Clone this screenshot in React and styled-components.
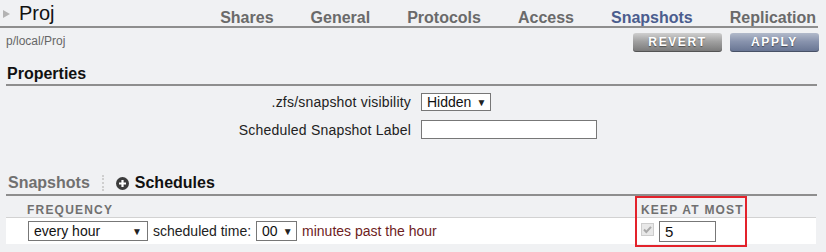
import React from 'react';
import styled, { createGlobalStyle } from 'styled-components';

const GlobalStyle = createGlobalStyle`
  html, body {
    margin: 0;
    padding: 0;
    background: #f0f1f3;
  }
  body {
    font-family: "Liberation Sans", Arial, sans-serif;
    color: #222;
  }
`;

const tabs = ['Shares', 'General', 'Protocols', 'Access', 'Snapshots', 'Replication'];

export default function App() {
  return (
    <Page>
      <GlobalStyle />
      <Header>
        <Title>
          <Caret />
          Proj
        </Title>
        <Tabs>
          {tabs.map((t) => (
            <Tab key={t} $active={t === 'Snapshots'}>
              {t}
            </Tab>
          ))}
        </Tabs>
      </Header>

      <SubBar>
        <Path>p/local/Proj</Path>
        <Actions>
          <Button $variant="gray">REVERT</Button>
          <Button $variant="blue">APPLY</Button>
        </Actions>
      </SubBar>

      <SectionTitle>Properties</SectionTitle>
      <PropGrid>
        <Label>.zfs/snapshot visibility</Label>
        <div>
          <SelectBox $width={70} $height={18}>
            Hidden <Arrow>▼</Arrow>
          </SelectBox>
        </div>
        <Label>Scheduled Snapshot Label</Label>
        <div>
          <TextInput $width={176} />
        </div>
      </PropGrid>

      <SubTabs>
        <SubTab>Snapshots</SubTab>
        <Separator />
        <AddIcon viewBox="0 0 13 13">
          <circle cx="6.5" cy="6.5" r="6.5" fill="#3c3c3c" />
          <path d="M6.5 3v7M3 6.5h7" stroke="#fff" strokeWidth="2.2" />
        </AddIcon>
        <SubTab $active>Schedules</SubTab>
      </SubTabs>

      <Table>
        <HeadRow>
          <HeadCell $pad={21}>FREQUENCY</HeadCell>
          <HeadCell $pad={6}>KEEP AT MOST</HeadCell>
        </HeadRow>
        <BodyRow>
          <Cell $pad={22}>
            <SelectBox $width={120} $height={20} $spread>
              every hour <Arrow>▼</Arrow>
            </SelectBox>
            <span>scheduled time:</span>
            <SelectBox $width={41} $height={20}>
              00 <Arrow>▼</Arrow>
            </SelectBox>
            <Note>minutes past the hour</Note>
          </Cell>
          <Cell $pad={6}>
            <Check>
              <svg viewBox="0 0 11 11" width="11" height="11">
                <path d="M2 5.5l2.3 2.5L9 2.8" fill="none" stroke="#a9a9a9" strokeWidth="2" />
              </svg>
            </Check>
            <TextInput $width={57} $height={21} defaultValue="5" />
          </Cell>
        </BodyRow>
        <Highlight />
      </Table>
    </Page>
  );
}

const Page = styled.div`
  width: 826px;
  height: 252px;
  overflow: hidden;
`;

const Header = styled.div`
  display: flex;
  align-items: flex-start;
  width: 818px;
  height: 26px;
  border-bottom: 2px solid #8e8e8e;
`;

const Title = styled.div`
  display: flex;
  align-items: center;
  gap: 9px;
  padding: 1px 0 0 3px;
  font-size: 20px;
  line-height: 24px;
  color: #111;
`;

const Caret = styled.span`
  width: 0;
  height: 0;
  border-left: 7px solid #b3b3b3;
  border-top: 4px solid transparent;
  border-bottom: 4px solid transparent;
  margin-top: 2px;
`;

const Tabs = styled.div`
  display: flex;
  gap: 37px;
  margin-left: auto;
  padding: 10px 2px 0 0;
`;

const Tab = styled.div`
  font-size: 16px;
  font-weight: 700;
  line-height: 16px;
  color: ${({ $active }) => ($active ? '#4b5d8e' : '#6a6a6a')};
  cursor: pointer;
`;

const SubBar = styled.div`
  display: flex;
  align-items: flex-start;
  padding: 5px 7px 0 6px;
`;

const Path = styled.div`
  padding-top: 1px;
  font-size: 12px;
  line-height: 14px;
  color: #666;
`;

const Actions = styled.div`
  display: flex;
  gap: 8px;
  margin-left: auto;
`;

const Button = styled.button`
  width: 89px;
  height: 19px;
  padding: 0 0 2px;
  border: none;
  border-radius: 3px;
  font-family: inherit;
  font-size: 12px;
  font-weight: 700;
  letter-spacing: 1.6px;
  color: #fff;
  text-shadow: 0 1px 1px rgba(0, 0, 0, 0.45);
  background: ${({ $variant }) =>
    $variant === 'blue'
      ? 'linear-gradient(#b2bacb, #8893ad 45%, #667391 100%)'
      : 'linear-gradient(#cfcfcf, #a0a0a0 45%, #777 100%)'};
  box-shadow: inset 0 -1px 0 rgba(0, 0, 0, 0.3);
  cursor: pointer;
`;

const SectionTitle = styled.div`
  margin: 13px 9px 0 6px;
  padding: 0 0 1px 1px;
  font-size: 16px;
  font-weight: 700;
  line-height: 18px;
  color: #111;
  border-bottom: 2px solid #8e8e8e;
`;

const PropGrid = styled.div`
  display: grid;
  grid-template-columns: 405px 1fr;
  column-gap: 10px;
  row-gap: 9px;
  align-items: center;
  padding: 7px 0 0 6px;
`;

const Label = styled.div`
  text-align: right;
  font-size: 14px;
  letter-spacing: 0.2px;
  color: #222;
`;

const SelectBox = styled.div`
  display: inline-flex;
  align-items: center;
  justify-content: ${({ $spread }) => ($spread ? 'space-between' : 'flex-start')};
  gap: 5px;
  box-sizing: border-box;
  width: ${({ $width }) => $width}px;
  height: ${({ $height }) => $height}px;
  padding: 0 5px;
  background: #fff;
  border: 1px solid #777;
  font-size: 14px;
  color: #111;
  white-space: nowrap;
`;

const Arrow = styled.span`
  font-size: 10px;
  color: #222;
`;

const TextInput = styled.input`
  box-sizing: border-box;
  width: ${({ $width }) => $width}px;
  height: ${({ $height }) => $height || 19}px;
  margin: 0;
  padding: 0 5px;
  background: #fff;
  border: 1px solid #777;
  font-family: inherit;
  font-size: 15px;
  color: #111;
  outline: none;
`;

const SubTabs = styled.div`
  display: flex;
  align-items: center;
  margin: 35px 9px 0 6px;
  padding: 0 0 2px 2px;
  border-bottom: 2px solid #8e8e8e;
`;

const SubTab = styled.div`
  font-size: 16px;
  font-weight: 700;
  line-height: 18px;
  color: ${({ $active }) => ($active ? '#111' : '#707070')};
`;

const Separator = styled.span`
  width: 0;
  height: 16px;
  margin: 0 12px;
  border-left: 2px dotted #cfcfcf;
`;

const AddIcon = styled.svg`
  width: 13px;
  height: 13px;
  margin-right: 6px;
`;

const Table = styled.div`
  position: relative;
  margin: 0 10px 0 6px;
`;

const HeadRow = styled.div`
  display: grid;
  grid-template-columns: 629px 1fr;
  padding-top: 7px;
  border-bottom: 1px solid #d2d2d2;
`;

const HeadCell = styled.div`
  padding-left: ${({ $pad }) => $pad}px;
  font-size: 12px;
  font-weight: 700;
  line-height: 14px;
  letter-spacing: 1.2px;
  color: #707070;
`;

const BodyRow = styled.div`
  display: grid;
  grid-template-columns: 629px 1fr;
  height: 26px;
  align-items: center;
  background: #fff;
`;

const Cell = styled.div`
  display: flex;
  align-items: center;
  gap: 5px;
  padding-left: ${({ $pad }) => $pad}px;
  font-size: 14px;
  color: #222;
`;

const Note = styled.span`
  color: #6e1d1d;
`;

const Check = styled.span`
  display: inline-flex;
  align-items: center;
  justify-content: center;
  box-sizing: border-box;
  width: 13px;
  height: 13px;
  margin-top: -4px;
  background: #e8e8e8;
  border: 1px solid #cdcdcd;
`;

const Highlight = styled.div`
  position: absolute;
  left: 629px;
  top: 0;
  width: 112px;
  height: 51px;
  box-sizing: border-box;
  border: 2px solid #e3222b;
  pointer-events: none;
`;
